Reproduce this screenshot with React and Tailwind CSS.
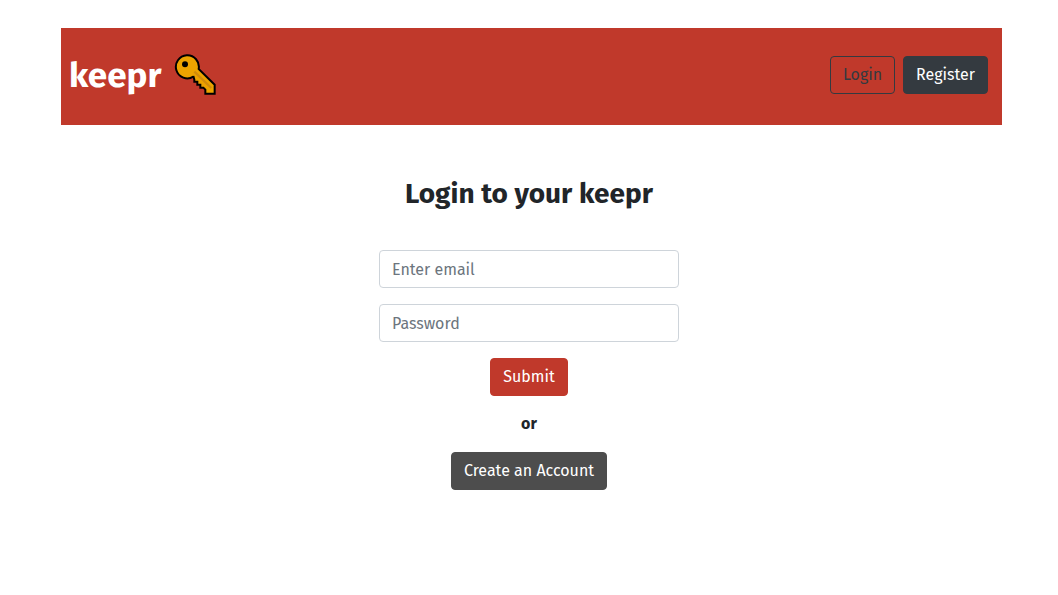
import React from "react";

function KeyIcon() {
  return (
    <svg className="h-[42px] w-[42px]" viewBox="27 27 126 126" aria-hidden="true">
      <path
        d="M85 93L88 104V110H97V119H106V128H115L121 134V146H149V119L101 72A34.500 34.500 0 1 0 85 95Z"
        fill="#eca300"
        stroke="#000"
        strokeWidth="6"
      />
      <path d="M88 80l51 49" stroke="#d18b0b" strokeWidth="7" />
      <circle cx="60" cy="58" r="9" fill="#000" />
    </svg>
  );
}

export default function App() {
  return (
    <div className="pt-7 font-['Fira_Sans',Roboto,sans-serif] text-base text-[#212529]">
      <header className="mr-14 ml-[61px] flex h-[97px] items-start justify-between bg-[#c0392b] pt-[26px] pr-3.5 pl-2">
        <a href="#" className="flex items-start gap-[13px] text-white">
          <span className="text-[35px] leading-[42px] font-bold">keepr</span>
          <KeyIcon />
        </a>
        <nav className="flex gap-2 pt-0.5">
          <button type="button" className="h-[38px] rounded border border-[#343a40] px-3 text-[#343a40]">
            Login
          </button>
          <button type="button" className="h-[38px] rounded border border-[#343a40] bg-[#343a40] px-3 text-white">
            Register
          </button>
        </nav>
      </header>
      <main className="flex flex-col items-center pt-12">
        <h1 className="text-[28px] leading-[42px] font-bold">Login to your keepr</h1>
        <form className="mt-[35px] flex w-[300px] max-w-full flex-col items-center gap-4">
          <input
            type="email"
            aria-label="Email"
            placeholder="Enter email"
            className="h-[38px] w-full rounded border border-[#ced4da] bg-white px-3 placeholder:text-[#6c757d]"
          />
          <input
            type="password"
            aria-label="Password"
            placeholder="Password"
            className="h-[38px] w-full rounded border border-[#ced4da] bg-white px-3 placeholder:text-[#6c757d]"
          />
          <button type="submit" className="h-[38px] rounded border border-[#c0392b] bg-[#c0392b] px-3 text-white">
            Submit
          </button>
          <p className="font-bold">or</p>
          <button type="button" className="h-[38px] rounded border border-[#4d4d4d] bg-[#4d4d4d] px-3 text-white">
            Create an Account
          </button>
        </form>
      </main>
    </div>
  );
}
